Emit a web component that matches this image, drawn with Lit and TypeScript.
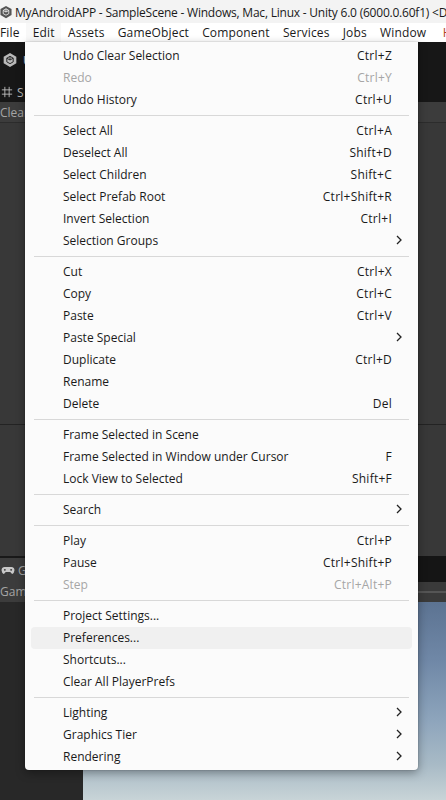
import { LitElement, html, css, svg } from "lit";
import { customElement } from "lit/decorators.js";

type Row = { l: string; s?: string; sub?: boolean; off?: boolean; hover?: boolean };
const groups: Row[][] = [
  [{ l: "Undo Clear Selection", s: "Ctrl+Z" }, { l: "Redo", s: "Ctrl+Y", off: true }, { l: "Undo History", s: "Ctrl+U" }],
  [{ l: "Select All", s: "Ctrl+A" }, { l: "Deselect All", s: "Shift+D" }, { l: "Select Children", s: "Shift+C" }, { l: "Select Prefab Root", s: "Ctrl+Shift+R" }, { l: "Invert Selection", s: "Ctrl+I" }, { l: "Selection Groups", sub: true }],
  [{ l: "Cut", s: "Ctrl+X" }, { l: "Copy", s: "Ctrl+C" }, { l: "Paste", s: "Ctrl+V" }, { l: "Paste Special", sub: true }, { l: "Duplicate", s: "Ctrl+D" }, { l: "Rename" }, { l: "Delete", s: "Del" }],
  [{ l: "Frame Selected in Scene" }, { l: "Frame Selected in Window under Cursor", s: "F" }, { l: "Lock View to Selected", s: "Shift+F" }],
  [{ l: "Search", sub: true }],
  [{ l: "Play", s: "Ctrl+P" }, { l: "Pause", s: "Ctrl+Shift+P" }, { l: "Step", s: "Ctrl+Alt+P", off: true }],
  [{ l: "Project Settings..." }, { l: "Preferences...", hover: true }, { l: "Shortcuts..." }, { l: "Clear All PlayerPrefs" }],
  [{ l: "Lighting", sub: true }, { l: "Graphics Tier", sub: true }, { l: "Rendering", sub: true }],
];
const menus = ["File", "Edit", "Assets", "GameObject", "Component", "Services", "Jobs", "Window", "Help"];

const cube = (c: string, line: string) => svg`<path d="M12 1.5 21.5 7v10L12 22.500 2.500 17V7z" fill="${c}"/><path d="M12 6.500 16.800 9.300V14.800L12 17.500 7.200 14.800V9.300zM12 6.500V12M7.200 9.300 12 12 16.800 9.300" fill="none" stroke="${line}" stroke-width="1.500"/>`;

@customElement("app-root")
export class AppRoot extends LitElement {
  static styles = css`
    :host { display: block; width: 446px; height: 800px; overflow: hidden; position: relative; background: #282828;
      font-family: "Open Sans", "Noto Sans", sans-serif; font-size: 12px; color: #1a1a1a; }
    .title { height: 23px; box-sizing: border-box; padding-top: 1px; background: #f3f3f3; display: flex; align-items: center; gap: 2px; white-space: nowrap; overflow: hidden; }
    .title span { letter-spacing: -0.22px; }
    .title svg { width: 14px; height: 14px; margin-left: -1px; flex: none; }
    .menubar { height: 19px; background: #fff; display: flex; align-items: stretch; white-space: nowrap; overflow: hidden; }
    .menubar span { box-sizing: border-box; padding: 1px 6.6px 0; line-height: 18px; flex: none; letter-spacing: 0.15px; }
    .menubar span:first-child { padding-left: 0; }
    .menubar .cur { background: #f8f8f8; }
    .menubar .help { color: #b3441f; padding-left: 10px; }
    .work { height: 758px; display: flex; flex-direction: column; color: #a9a9a9; }
    .top { height: 60px; background: #171717; display: flex; flex-direction: column; flex: none; }
    .logo { height: 36px; display: flex; align-items: center; gap: 5px; padding-left: 2px; color: #ccc; font-weight: 600; }
    .logo svg { width: 16px; height: 16px; }
    .scene { display: flex; align-items: center; gap: 4px; padding: 4px 0 0 1px; height: 20px; color: #b5b5b5; }
    .scene svg { width: 12px; height: 12px; }
    .toolbar { height: 21px; flex: none; background: #3c3c3c; border-bottom: 1px solid #2c2c2c; display: flex; align-items: center; color: #a5a5a5; box-sizing: border-box; }
    .p1 { height: 302px; flex: none; background: #383838; border-bottom: 1px solid #232323; box-sizing: border-box; }
    .p2 { height: 131px; flex: none; background: #383838; }
    .game { height: 46px; flex: none; display: flex; }
    .game-l { width: 40px; box-sizing: border-box; padding-top: 1px; background: #3c3c3c; border-top: 2px solid #191919; color: #a5a5a5; flex: none; display: flex; flex-direction: column; }
    .game-l div { height: 22px; flex: none; display: flex; align-items: center; gap: 3px; white-space: nowrap; }
    .game-l .t { height: 21px; }
    .game-l svg { width: 14px; height: 9px; margin-left: 1px; flex: none; }
    .game-r { flex: 1; background: #3a3a3a; display: flex; flex-direction: column; }
    .game-r i { display: block; height: 26px; background: #151515; flex: none; }
    .game-r b { display: block; height: 2px; background: #555; margin-top: 9px; }
    .bottom { flex: 1; display: flex; }
    .left { width: 83px; background: #282828; flex: none; }
    .sky { flex: 1; background: linear-gradient(180deg, #5c7392 0%, #7088a7 30%, #8ea5bc 60%, #a8bac6 82%, #c8d4d7 100%); }
    .menu { position: absolute; left: 25px; top: 42px; width: 393px; height: 728px; box-sizing: border-box; padding: 3px 6px 2px; background: #fbfbfb; border-radius: 0 0 4px 4px; box-shadow: 0 3px 10px rgba(0,0,0,.35), 0 0 0 1px rgba(0,0,0,.06); }
    .row { height: 22px; box-sizing: border-box; padding: 0 8px 2px 32px; display: flex; align-items: center; justify-content: space-between; border-radius: 4px; color: #1a1a1a; white-space: nowrap; }
    .row.off { color: #a6a6a6; }
    .row.hover { background: #f0f0f0; }
    .row .s { padding-right: 12px; letter-spacing: 0.25px; }
    .row svg { width: 8px; height: 10px; margin-right: 1px; }
    .sep { height: 1px; background: #d8d8d8; margin: 4px 0 4px 3px; width: 375px; }
  `;
  render() {
    return html`
      <div class="title">
        <svg viewBox="0 0 24 24">${cube("#555", "#eee")}</svg>
        <span>MyAndroidAPP - SampleScene - Windows, Mac, Linux - Unity 6.0 (6000.0.60f1) &lt;DX11&gt;</span>
      </div>
      <div class="menubar">
        ${menus.map((m) => html`<span class="${m === "Edit" ? "cur" : m === "Help" ? "help" : ""}">${m}</span>`)}
      </div>
      <div class="work">
        <div class="top">
          <div class="logo"><svg viewBox="0 0 24 24">${cube("#b9b9b9", "#2a2a2a")}</svg><span>U</span></div>
          <div class="scene">
            <svg viewBox="0 0 14 14" fill="none" stroke="#c4c4c4" stroke-width="1"><path d="M4.500 1v12M9.500 1v12M1 4.500h12M1 9.500h12"/></svg><span>S</span>
          </div>
        </div>
        <div class="toolbar">Clear</div>
        <div class="p1"></div>
        <div class="p2"></div>
        <div class="game">
          <div class="game-l">
            <div><svg viewBox="0 0 15 10"><path d="M4 1h7a3.500 3.500 0 0 1 3.500 4.500Q14 9 12 8.800L10 6.800H5L3 8.800Q1 9 .5 5.500A3.500 3.500 0 0 1 4 1z" fill="#c8c8c8"/><circle cx="4" cy="4.300" r="1.100" fill="#3c3c3c"/><circle cx="11" cy="4.300" r="1.100" fill="#3c3c3c"/></svg><span>G</span></div>
            <div class="t">Game</div>
          </div>
          <div class="game-r"><i></i><b></b></div>
        </div>
        <div class="bottom"><div class="left"></div><div class="sky"></div></div>
      </div>
      <div class="menu">
        ${groups.map((g, i) => html`
          ${i ? html`<div class="sep"></div>` : ""}
          ${g.map((r) => html`<div class="row ${r.off ? "off" : ""} ${r.hover ? "hover" : ""}">
            <span>${r.l}</span>
            ${r.sub
              ? html`<svg viewBox="0 0 8 10" fill="none" stroke="#222" stroke-width="1.300"><path d="M2 1l4 4-4 4"/></svg>`
              : r.s ? html`<span class="s">${r.s}</span>` : ""}
          </div>`)}
        `)}
      </div>
    `;
  }
}
